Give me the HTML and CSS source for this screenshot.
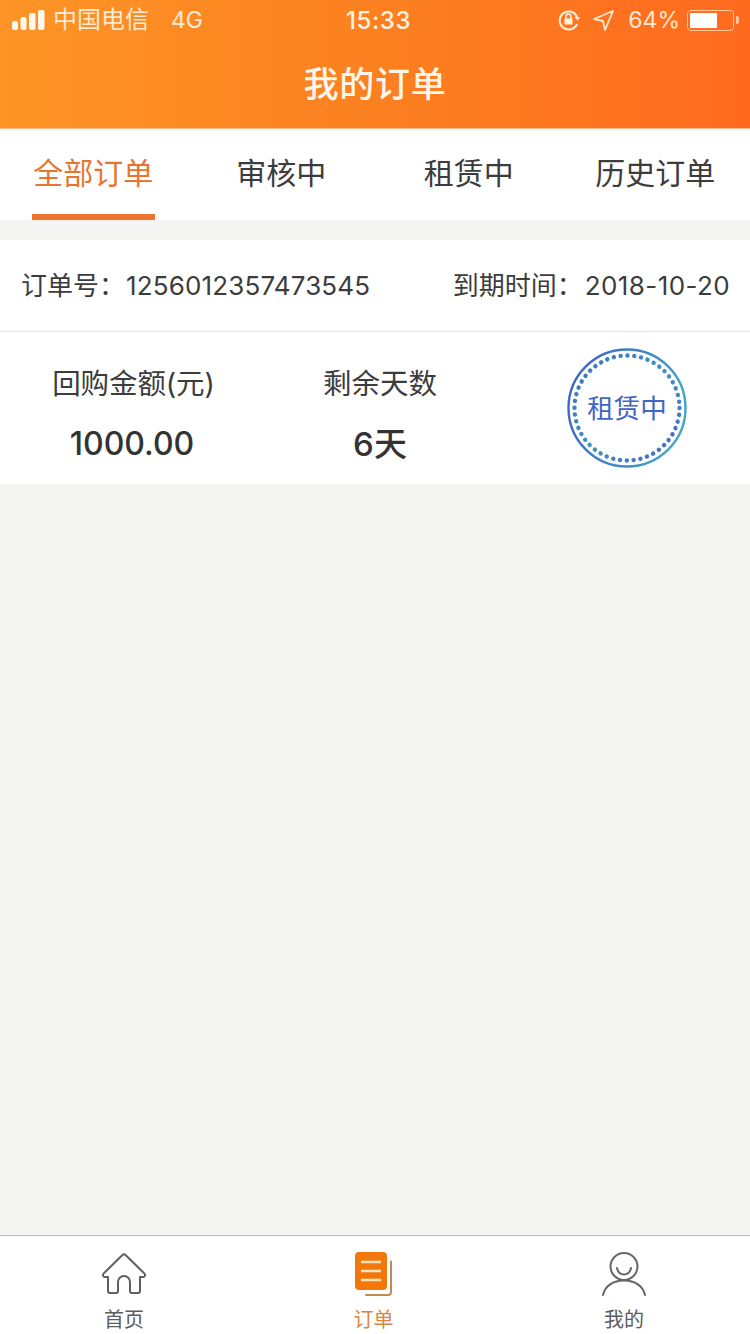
FILE: index.html
```html
<!DOCTYPE html>
<html lang="zh-CN">
<head>
<meta charset="utf-8">
<title>我的订单</title>
<link rel="stylesheet" href="styles.css">
</head>
<body>
<div class="app">
  <header class="header">
    <div class="status">
      <div class="status-left">
        <svg class="signal" width="33" height="20" viewBox="0 0 33 20"><rect x="0" y="11" width="6" height="9" rx="2"/><rect x="8.500" y="7" width="6" height="13" rx="2"/><rect x="17" y="3" width="6.500" height="17" rx="2"/><rect x="26" y="0" width="6.500" height="20" rx="2"/></svg>
        <span class="carrier">中国电信</span>
        <span class="net">4G</span>
      </div>
      <div class="status-time">15:33</div>
      <div class="status-right">
        <svg class="ic-lock" width="24" height="22" viewBox="0 0 24 22" fill="none" stroke="#fff0dc" stroke-width="2"><path d="M20 8A9 9 0 1 0 20 15"/><path d="M17.500 8h6l-3 3.500z" fill="#fff0dc" stroke="none"/><rect x="7.500" y="9.500" width="8" height="6" fill="#fff0dc" stroke="none"/><path d="M9 10V7.500a2.500 2.500 0 0 1 5 0V10" stroke-width="1.500"/></svg>
        <svg class="ic-loc" width="21" height="21" viewBox="0 0 21 21" fill="none" stroke="#ffe8d0" stroke-width="1.800" stroke-linejoin="round"><path d="M20 1 1 9l9 2 2 9z"/></svg>
        <span class="pct">64%</span>
        <div class="battery"><div class="battery-fill"></div></div>
        <div class="battery-cap"></div>
      </div>
    </div>
    <h1 class="title">我的订单</h1>
  </header>

  <nav class="tabs">
    <a class="tab tab-active"><span class="tab-label">全部订单</span></a>
    <a class="tab"><span class="tab-label">审核中</span></a>
    <a class="tab"><span class="tab-label">租赁中</span></a>
    <a class="tab"><span class="tab-label">历史订单</span></a>
  </nav>

  <main class="content">
    <section class="card">
      <div class="card-top">
        <div class="order-no"><span class="cn">订单号：</span><span class="num">1256012357473545</span></div>
        <div class="due"><span class="cn">到期时间：</span><span class="num">2018-10-20</span></div>
      </div>
      <div class="card-body">
        <div class="metric metric-amount">
          <div class="metric-label">回购金额(元)</div>
          <div class="metric-value">1000.00</div>
        </div>
        <div class="metric metric-days">
          <div class="metric-label">剩余天数</div>
          <div class="metric-value">6天</div>
        </div>
        <div class="stamp">
          <svg class="stamp-ring" width="120" height="120" viewBox="0 0 120 120" fill="none">
            <defs>
              <linearGradient id="ring" x1="0" y1="0" x2="1" y2="1">
                <stop offset="0" stop-color="#3f6fc4"/>
                <stop offset="0.500" stop-color="#3f95c0"/>
                <stop offset="1" stop-color="#4a62c6"/>
              </linearGradient>
              <linearGradient id="ring2" x1="0" y1="0" x2="1" y2="0.300">
                <stop offset="0" stop-color="#3f60c4"/>
                <stop offset="0.700" stop-color="#3f8cc8"/>
                <stop offset="1" stop-color="#3fa6c8"/>
              </linearGradient>
            </defs>
            <circle cx="60" cy="60" r="58.500" stroke="url(#ring2)" stroke-width="2.400"/>
            <circle cx="60" cy="60" r="52.500" stroke="url(#ring)" stroke-width="4.400" stroke-linecap="round" stroke-dasharray="0.100 6.772"/>
          </svg>
          <span class="stamp-text">租赁中</span>
        </div>
      </div>
    </section>
  </main>

  <footer class="tabbar">
    <a class="tb-item">
      <svg width="48" height="46" viewBox="0 0 48 46" fill="none" stroke="#5f5f5f" stroke-width="2" stroke-linejoin="round" stroke-linecap="round"><path d="M8 26v14a2 2 0 0 0 2 2h6a2 2 0 0 0 2-2V31a6 6 0 0 1 12 0v9a2 2 0 0 0 2 2h6a2 2 0 0 0 2-2V26h3a2 2 0 0 0 1.500-3.400L25.500 4a2 2 0 0 0-3 0L3.500 22.600A2 2 0 0 0 5 26z"/></svg>
      <span class="tb-label">首页</span>
    </a>
    <a class="tb-item tb-active">
      <svg width="40" height="46" viewBox="0 0 40 46" fill="none"><path d="M37 10.500V41a3 3 0 0 1-3 3H12" stroke="#c08a50" stroke-width="2" stroke-linecap="round"/><rect x="1" y="1" width="32" height="38" rx="4" fill="#f2780c"/><path d="M7 11h20M7 20h20M7 29h20" stroke="#ffe3bd" stroke-width="2.400"/></svg>
      <span class="tb-label">订单</span>
    </a>
    <a class="tb-item">
      <svg width="46" height="46" viewBox="0 0 46 46" fill="none" stroke="#666" stroke-width="2" stroke-linecap="round"><circle cx="23" cy="15.500" r="13.500"/><path d="M16 17c1.500 8.500 12.500 8.500 14 0"/><path d="M2 44C4 35 12 29.500 23 29.500S42 35 44 44"/></svg>
      <span class="tb-label">我的</span>
    </a>
  </footer>
</div>
</body>
</html>
```
FILE: styles.css
```css
* { box-sizing: border-box; }
html, body { margin: 0; padding: 0; }
body {
  font-family: "Inter", "Noto Sans CJK SC", sans-serif;
  color: #333;
  background: #f4f4f2;
}
.app {
  width: 750px;
  height: 1334px;
  display: flex;
  flex-direction: column;
  overflow: hidden;
}
.header {
  height: 129px;
  background: linear-gradient(90deg, #fd9426 0%, #fc8020 50%, #ff6a1f 100%);
  border-bottom: 1px solid #f7b98c;
  display: flex;
  flex-direction: column;
  color: #fff;
}
.status {
  height: 40px;
  display: grid;
  grid-template-columns: 1fr auto 1fr;
  align-items: center;
  padding: 0 11px 0 12px;
  font-size: 23px;
  color: #ffe9d0;
}
.status-left, .status-right { display: flex; align-items: center; }
.status-right { justify-content: flex-end; }
.signal { fill: #fff8ee; margin-right: 8px; }
.carrier { font-size: 24px; font-weight: 400; line-height: 30px; }
.net { margin-left: 22px; font-size: 23px; font-weight: 400; }
.status-time { font-size: 24px; font-weight: 500; color: #fff3e2; letter-spacing: 0.6px; padding-left: 6px; }
.ic-lock { margin-right: 12px; }
.ic-loc { margin-right: 14px; }
.pct { font-size: 23px; font-weight: 400; margin-right: 7px; }
.battery {
  width: 47px;
  height: 21px;
  border: 1.500px solid #ffc795;
  border-radius: 4px;
  padding: 2px;
}
.battery-fill { width: 27px; height: 100%; background: #fff; border-radius: 1px; }
.battery-cap { width: 3px; height: 8px; margin-left: 2px; background: #ffc795; border-radius: 0 2px 2px 0; }
.title {
  margin: 0;
  height: 88px;
  line-height: 88px;
  font-size: 35px;
  font-weight: 500;
  text-align: center;
  color: #fff6ea;
  letter-spacing: 0.7px;
}
.tabs {
  height: 91px;
  background: #fff;
  display: grid;
  grid-template-columns: repeat(4, 1fr);
}
.tab {
  display: flex;
  justify-content: center;
  color: #3c3c3c;
  font-size: 30px;
  font-weight: 400;
  line-height: 88px;
}
.tab:last-child { padding-right: 2px; }
.tab-label { display: block; height: 91px; padding: 0 1px; }
.tab-active { color: #e8752f; }
.tab-active .tab-label { border-bottom: 6px solid #ee7430; width: 123px; text-align: center; margin-right: 1px; }
.content { flex: 1; padding-top: 20px; background: #f4f4f2; }
.card { background: #fff; }
.card-top {
  height: 92px;
  padding: 0 20px 4px 21px;
  display: flex;
  justify-content: space-between;
  align-items: center;
  border-bottom: 1px solid #e2e2e2;
  font-size: 26px;
  color: #3c3c3c;
  font-weight: 400;
}
.cn { font-weight: 400; }
.num { letter-spacing: 0.4px; font-weight: 400; }
.order-no .num { letter-spacing: 0.15px; margin-left: 1px; }
.due .num { margin-left: 2px; }
.card-body {
  height: 152px;
  display: flex;
  position: relative;
}
.metric { display: flex; flex-direction: column; align-items: center; }
.metric-amount { width: 264px; }
.metric-amount .metric-label { padding-left: 3px; letter-spacing: -0.1px; }
.metric-days { width: 232px; }
.metric-days .metric-value { font-size: 33px; }
.metric-label { font-size: 28.500px; line-height: 40px; margin-top: 32px; font-weight: 400; color: #3c3c3c; }
.metric-value { font-size: 32px; line-height: 44px; margin-top: 18px; font-weight: 500; color: #333; }
.stamp {
  width: 120px;
  height: 120px;
  margin: 16px 0 0 71px;
  position: relative;
  display: flex;
  align-items: center;
  justify-content: center;
}
.stamp-ring { position: absolute; left: 0; top: 0; }
.stamp-text { font-size: 26.500px; font-weight: 400; color: #4065c5; position: relative; top: -2px; }
.tabbar {
  height: 99px;
  background: #fff;
  border-top: 1px solid #b8b8b8;
  display: grid;
  grid-template-columns: 248px 251px 250px;
}
.tb-item {
  display: flex;
  flex-direction: column;
  align-items: center;
  height: 98px;
  padding-top: 15px;
  color: #5c5c5c;
}
.tb-item svg { display: block; height: 46px; }
.tb-label { font-size: 20px; line-height: 28px; margin-top: 9px; font-weight: 400; }
.tb-active { color: #d98442; }
```
